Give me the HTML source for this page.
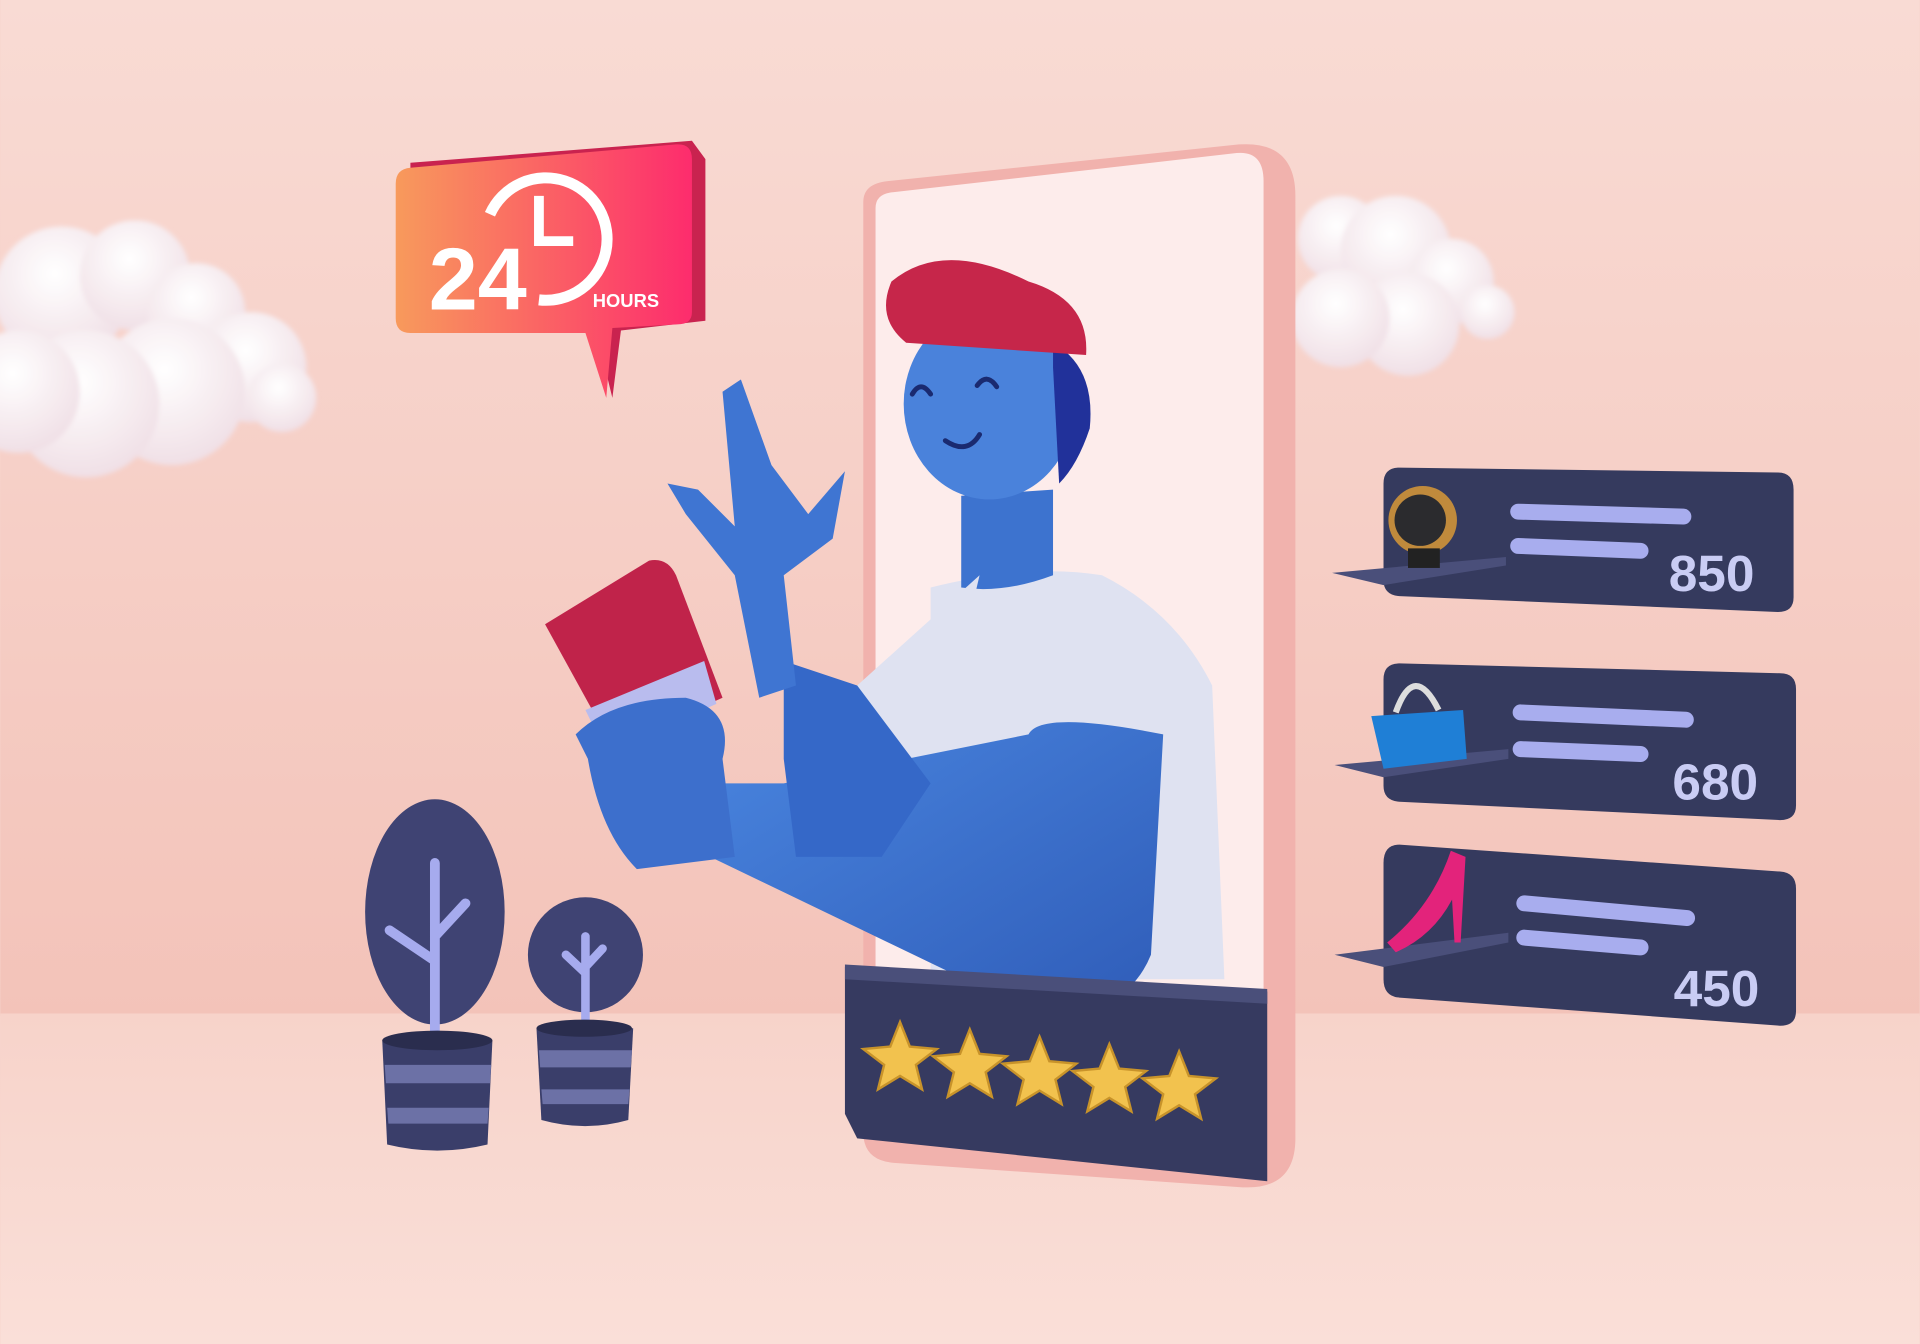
<!DOCTYPE html>
<html><head><meta charset="utf-8"><style>
html,body{margin:0;padding:0;width:1920px;height:1344px;overflow:hidden;background:#f7d4cc}
svg{display:block}
</style></head><body>
<svg width="1920" height="1344" viewBox="0 0 1568 1098" xmlns="http://www.w3.org/2000/svg">
<defs>
<linearGradient id="bg" x1="0" y1="0" x2="0" y2="1"><stop offset="0" stop-color="#f9dbd4"/><stop offset="1" stop-color="#f3c3b9"/></linearGradient>
<linearGradient id="fl" x1="0" y1="0" x2="0" y2="1"><stop offset="0" stop-color="#f7d3ca"/><stop offset="1" stop-color="#fadfd8"/></linearGradient>
<linearGradient id="bub" x1="0" y1="0" x2="1" y2="0"><stop offset="0" stop-color="#f89a5c"/><stop offset="1" stop-color="#fd2c6d"/></linearGradient>
<radialGradient id="cl" cx="0.45" cy="0.35" r="0.7"><stop offset="0" stop-color="#ffffff"/><stop offset="1" stop-color="#efdde4"/></radialGradient>
<linearGradient id="skin" x1="0" y1="0" x2="1" y2="1"><stop offset="0" stop-color="#4a86e0"/><stop offset="1" stop-color="#2f5cb8"/></linearGradient>
<filter id="bl"><feGaussianBlur stdDeviation="2"/></filter>
</defs>
<rect width="1568" height="830" fill="url(#bg)"/>
<rect y="828" width="1568" height="270" fill="url(#fl)"/>
<!-- clouds -->
<g fill="url(#cl)" filter="url(#bl)">
<circle cx="50" cy="240" r="55"/><circle cx="110" cy="225" r="45"/><circle cx="160" cy="255" r="40"/><circle cx="205" cy="300" r="45"/><circle cx="230" cy="325" r="28"/><circle cx="140" cy="320" r="60"/><circle cx="70" cy="330" r="60"/><circle cx="15" cy="320" r="50"/>
<circle cx="1095" cy="195" r="35"/><circle cx="1140" cy="205" r="45"/><circle cx="1185" cy="230" r="35"/><circle cx="1215" cy="255" r="22"/><circle cx="1150" cy="265" r="42"/><circle cx="1095" cy="260" r="40"/>
</g>
<!-- bubble -->
<polygon points="335,133 565,115 576,130 576,262 507,270 500,325 487,272 335,272" fill="#c9234f"/>
<path d="M323,150 Q323,138 335,137 L552,118 Q565,117 565,130 L565,255 Q565,265 553,265 L500,268 L495,325 L478,272 L335,272 Q323,272 323,260 Z" fill="url(#bub)"/>
<text x="350" y="253" font-family="Liberation Sans,sans-serif" font-weight="bold" font-size="72" fill="#fff">24</text>
<path d="M400,175 A50,50 0 1 1 440,245" fill="none" stroke="#fff" stroke-width="9"/>
<path d="M440,160 L440,197 L468,197" fill="none" stroke="#fff" stroke-width="8"/>
<text x="484" y="251" font-family="Liberation Sans,sans-serif" font-weight="bold" font-size="15" fill="#fff">HOURS</text>
<!-- phone -->
<path d="M705,165 Q705,150 725,148 L1012,118 Q1058,115 1058,160 L1058,930 Q1058,972 1015,970 L730,950 Q705,948 705,925 Z" fill="#f1b2ad"/>
<path d="M715,170 Q715,158 730,157 L1010,125 Q1032,123 1032,148 L1032,930 L715,920 Z" fill="#fdeceb"/>
<!-- person body -->
<path d="M760,480 Q840,460 900,470 Q960,500 990,560 L1000,800 L760,800 Z" fill="#dfe2f1"/>
<path d="M785,405 L860,400 L860,470 Q820,485 785,480 Z" fill="#3d73cf"/>
<path d="M800,470 L700,560 L705,640 L760,640 Z" fill="#dfe2f1"/>
<!-- head -->
<ellipse cx="808" cy="330" rx="70" ry="78" fill="#4a82db"/>
<path d="M860,280 Q895,300 890,350 Q880,380 865,395 L860,300 Z" fill="#21319a"/>
<path d="M728,230 Q770,195 840,230 Q890,245 887,290 L740,280 Q715,260 728,230 Z" fill="#c6264a"/>
<path d="M745,322 Q752,310 760,322 M798,315 Q806,304 814,316 M772,360 Q790,372 800,355" fill="none" stroke="#1a2a70" stroke-width="4" stroke-linecap="round"/>
<!-- arms -->
<path d="M840,600 Q850,580 950,600 L940,780 Q920,830 850,830 L580,700 L560,640 L640,640 Z" fill="url(#skin)"/>
<path d="M640,620 L650,700 L720,700 L760,640 L700,560 L640,540 Z" fill="#3568c8"/>
<path d="M600,470 L560,420 L545,395 L570,400 L600,430 L590,320 L605,310 L630,380 L660,420 L690,385 L680,440 L640,470 L650,560 L620,570 Z" fill="#3f75d2"/>
<!-- hand card -->
<path d="M445,510 L530,458 Q545,455 552,470 L590,570 L500,610 Z" fill="#c0234a"/>
<path d="M478,580 L575,540 L585,575 L495,615 Z" fill="#b9bcee"/>
<path d="M470,600 Q500,570 560,570 Q600,580 590,620 L600,700 L520,710 Q490,680 480,620 Z" fill="#3d6fcc"/>
<!-- rating base -->
<polygon points="690,790 1035,810 1035,965 700,930 690,910" fill="#363a60"/>
<polygon points="690,788 1035,808 1035,820 690,800" fill="#4a4f7a"/>
<g fill="#f2c24e" stroke="#c8932a" stroke-width="2">
<polygon id="s" points="735,835 743,855 765,857 748,870 753,890 735,879 717,890 722,870 705,857 727,855"/>
<use href="#s" x="57" y="6"/><use href="#s" x="114" y="12"/><use href="#s" x="171" y="18"/><use href="#s" x="228" y="24"/>
</g>
<!-- shelves -->
<g font-family="Liberation Sans,sans-serif" font-weight="bold" font-size="42" fill="#c9ccf4">
<path d="M1130,395 Q1130,382 1143,382 L1452,386 Q1465,386 1465,400 L1465,488 Q1465,500 1452,500 L1143,487 Q1130,486 1130,474 Z" fill="#353a5e"/>
<polygon points="1088,468 1230,455 1230,462 1130,478" fill="#4a4f7a"/>
<path d="M1240,418 L1375,422 M1240,446 L1340,450" stroke="#a8adee" stroke-width="13" stroke-linecap="round"/>
<circle cx="1162" cy="425" r="28" fill="#c08a3c"/><circle cx="1160" cy="425" r="21" fill="#2b2b2e"/><rect x="1150" y="448" width="26" height="16" fill="#222"/>
<text x="1363" y="483">850</text>
<path d="M1130,555 Q1130,542 1143,542 L1454,550 Q1467,550 1467,563 L1467,658 Q1467,670 1454,670 L1143,655 Q1130,654 1130,642 Z" fill="#353a5e"/>
<polygon points="1090,625 1232,612 1232,620 1130,635" fill="#4a4f7a"/>
<path d="M1242,582 L1377,588 M1242,612 L1340,616" stroke="#a8adee" stroke-width="13" stroke-linecap="round"/>
<path d="M1120,585 L1195,580 L1198,620 L1130,628 Z" fill="#1f7fd6"/><path d="M1140,582 Q1155,540 1175,580" fill="none" stroke="#ddd" stroke-width="5"/>
<text x="1366" y="653">680</text>
<path d="M1130,705 Q1130,690 1143,690 L1454,712 Q1467,713 1467,726 L1467,826 Q1467,838 1454,838 L1143,815 Q1130,814 1130,800 Z" fill="#353a5e"/>
<polygon points="1090,780 1232,762 1232,770 1130,790" fill="#4a4f7a"/>
<path d="M1245,738 L1378,750 M1245,766 L1340,774" stroke="#a8adee" stroke-width="13" stroke-linecap="round"/>
<path d="M1133,770 Q1170,740 1185,695 L1197,700 L1193,770 L1188,770 L1186,735 Q1170,765 1140,778 Z" fill="#e3237b"/>
<text x="1367" y="822">450</text>
</g>
<!-- plants -->
<ellipse cx="355" cy="745" rx="57" ry="92" fill="#3f4373"/>
<path d="M355,705 L355,850 M355,785 L318,760 M355,765 L380,738" stroke="#a6abee" stroke-width="8" fill="none" stroke-linecap="round"/>
<path d="M312,850 L402,850 L398,935 Q357,945 316,935 Z" fill="#3a3e6a"/>
<path d="M314,870 L401,870 L400,885 L315,885 Z M316,905 L399,905 L398,918 L317,918 Z" fill="#6c71a6"/>
<ellipse cx="357" cy="850" rx="45" ry="8" fill="#2a2d4e"/>
<circle cx="478" cy="780" r="47" fill="#3f4373"/>
<path d="M478,765 L478,845 M478,795 L462,780 M478,790 L492,775" stroke="#a6abee" stroke-width="7" fill="none" stroke-linecap="round"/>
<path d="M438,840 L517,840 L513,915 Q478,925 442,915 Z" fill="#3a3e6a"/>
<path d="M440,858 L516,858 L515,872 L441,872 Z M442,890 L514,890 L513,902 L443,902 Z" fill="#6c71a6"/>
<ellipse cx="477" cy="840" rx="39" ry="7" fill="#2a2d4e"/>
</svg>
</body></html>
